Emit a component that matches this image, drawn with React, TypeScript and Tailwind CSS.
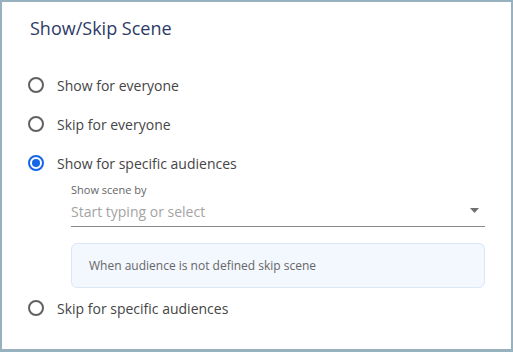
type Option = { id: string; label: string };

const options: Option[] = [
  { id: 'show-all', label: 'Show for everyone' },
  { id: 'skip-all', label: 'Skip for everyone' },
  { id: 'show-some', label: 'Show for specific audiences' },
];

function Radio({ checked }: { checked?: boolean }) {
  if (checked) {
    return (
      <span className="flex h-4 w-4 shrink-0 items-center justify-center rounded-full border-2 border-[#1565e6]">
        <span className="h-2 w-2 rounded-full bg-[#1565e6]" />
      </span>
    );
  }
  return <span className="h-4 w-4 shrink-0 rounded-full border-2 border-[#616161]" />;
}

function RadioRow({ label, checked }: { label: string; checked?: boolean }) {
  return (
    <div className="flex h-6 items-center gap-[13px]">
      <Radio checked={checked} />
      <span className="text-[14px] text-[#454545]">{label}</span>
    </div>
  );
}

export default function App() {
  const selected = 'show-some';

  return (
    <div
      className="h-[352px] w-[513px] border-2 border-b-[3px] border-[#97b1bf] bg-white px-[26px]"
      style={{ fontFamily: '"Open Sans", "Noto Sans", sans-serif' }}
    >
      <h1 className="mt-[14px] pl-[2px] text-[18px] leading-6 text-[#2d3a68]">Show/Skip Scene</h1>

      <div className="mt-[33px] flex flex-col gap-[15px]">
        {options.map((o) => (
          <RadioRow key={o.id} label={o.label} checked={o.id === selected} />
        ))}
      </div>

      {/* audience picker for the selected option */}
      <div className="ml-[43px] mt-[8px]">
        <p className="text-[11px] leading-[14px] text-[#666]">Show scene by</p>
        <div className="flex h-[30px] items-center justify-between border-b border-[#8a8a8a]">
          <span className="text-[14px] text-[#a3a3a3]">Start typing or select</span>
          <svg width="9" height="5" viewBox="0 0 9 5" className="mr-[6px] mt-[-2px]">
            <path d="M0 0h9L4.5 5z" fill="#707070" />
          </svg>
        </div>
        <div className="mt-4 flex h-[45px] items-center rounded-md border border-[#dbe6f7] bg-[#f3f7fe] px-[17px]">
          <span className="text-[12px] text-[#666]">When audience is not defined skip scene</span>
        </div>
      </div>

      <div className="mt-[8px]">
        <RadioRow label="Skip for specific audiences" />
      </div>
    </div>
  );
}
